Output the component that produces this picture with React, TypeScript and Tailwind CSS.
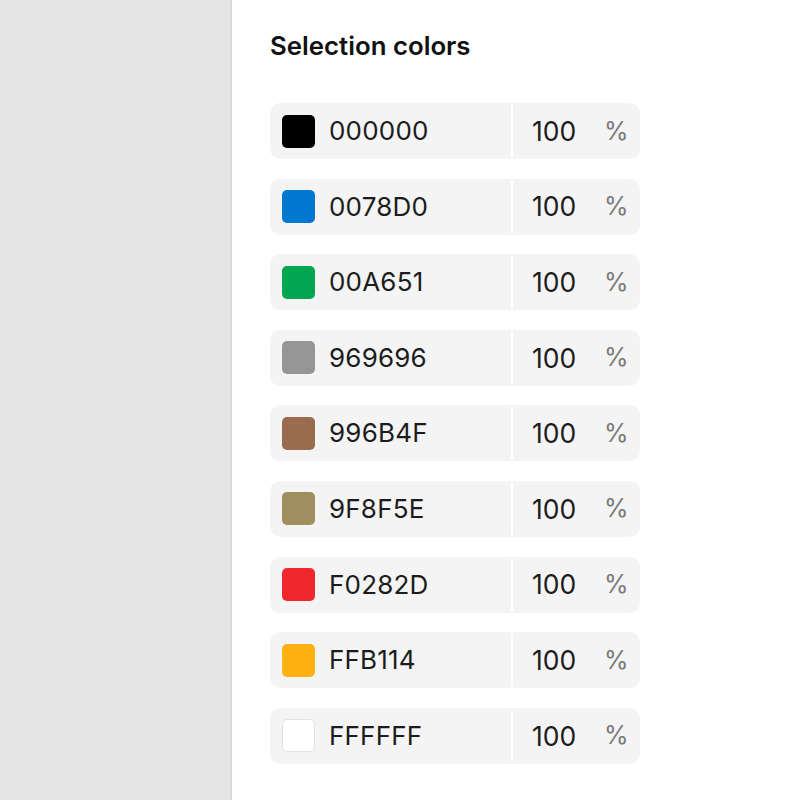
const colors = ['000000', '0078D0', '00A651', '969696', '996B4F', '9F8F5E', 'F0282D', 'FFB114', 'FFFFFF'];

function ColorRow({ hex }: { hex: string }) {
  const isWhite = hex === 'FFFFFF';
  return (
    <div className="flex h-[56px] w-[370px] items-stretch rounded-[10px] bg-[#f4f4f4]">
      <div className="flex w-[241px] items-center gap-[14px] pl-[12px]">
        <div
          className={
            'h-[33px] w-[33px] rounded-[5px] ' + (isWhite ? 'border border-[#e2e2e2]' : '')
          }
          style={{ backgroundColor: '#' + hex }}
        />
        <span className="text-[26px] leading-none tracking-[0.2px] text-[#1c1c1c]">{hex}</span>
      </div>
      <div className="my-[2px] w-[2px] bg-white" />
      <div className="flex flex-1 items-center pl-[19px]">
        <span className="w-[72px] text-[26.5px] leading-none text-[#1c1c1c]">100</span>
        <span className="text-[25px] leading-none text-[#7a7a7a]">%</span>
      </div>
    </div>
  );
}

export default function App() {
  return (
    <div className="flex h-[800px] w-[800px] overflow-hidden font-['Inter',sans-serif]">
      <div className="w-[230px] shrink-0 bg-[#e5e5e5]" />
      <div className="w-[2px] shrink-0 bg-[#dadada]" />
      <div className="flex-1 bg-white pl-[38px] pt-[31px]">
        <h2 className="text-[25.8px] font-semibold leading-[30px] text-[#111]">Selection colors</h2>
        <div className="mt-[42px] flex flex-col gap-[19.6px]">
          {colors.map((c) => (
            <ColorRow key={c} hex={c} />
          ))}
        </div>
      </div>
    </div>
  );
}
